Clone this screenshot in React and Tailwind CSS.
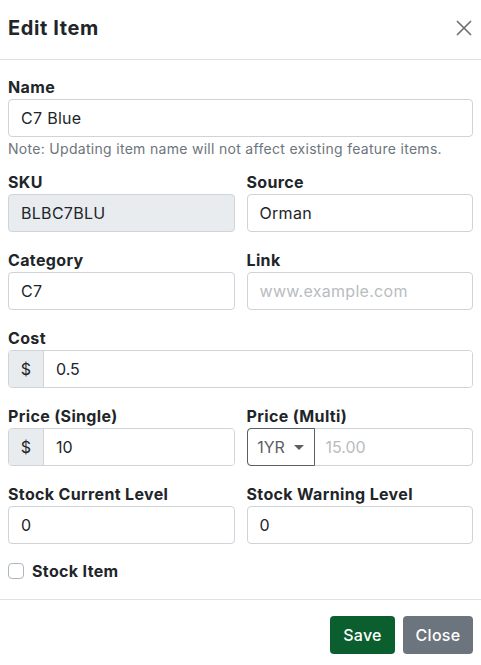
const font = { fontFamily: 'Inter, "Noto Sans", sans-serif' };

function Label({ children }) {
  return <label className="block text-[16px] font-bold text-[#212529] leading-[20px] mb-[2px] tracking-[0.35px]">{children}</label>;
}

function Input({ value, placeholder, disabled, className = '' }) {
  return (
    <div
      className={`h-[38px] border border-[#ced4da] rounded-[4px] px-[12px] flex items-center text-[16px] tracking-[0.3px] ${
        disabled ? 'bg-[#e9ecef]' : 'bg-white'
      } ${value ? 'text-[#212529]' : 'text-[#b8bcc0]'} ${className}`}
    >
      {value || placeholder}
    </div>
  );
}

function Addon({ value }) {
  return (
    <div className="h-[38px] flex border border-[#ced4da] rounded-[4px] overflow-hidden text-[16px] text-[#212529]">
      <div className="w-[35px] bg-[#e9ecef] border-r border-[#ced4da] flex items-center justify-center">$</div>
      <div className="flex-1 px-[12px] flex items-center bg-white">{value}</div>
    </div>
  );
}

function Field({ label, children }) {
  return (
    <div className="flex-1 min-w-0">
      <Label>{label}</Label>
      {children}
    </div>
  );
}

export default function App() {
  return (
    <div className="w-[481px] h-[665px] bg-white" style={font}>
      <div className="h-[60px] flex items-center justify-between px-[8px] pb-[3px] border-b border-[#dee2e6]">
        <h2 className="text-[20px] font-bold text-[#212529] tracking-[0.6px]">Edit Item</h2>
        <svg width="16" height="16" viewBox="0 0 16 16" className="mr-[1px]">
          <path d="M1 1L15 15M15 1L1 15" stroke="#6c6c6c" strokeWidth="1.6" />
        </svg>
      </div>
      <div className="px-[8px] pt-[17px] pb-[16px] flex flex-col">
        <Label>Name</Label>
        <Input value="C7 Blue" />
        <p className="text-[14px] text-[#6c757d] mt-[3px] leading-[18px] tracking-[0.3px]">Note: Updating item name will not affect existing feature items.</p>

        <div className="flex gap-[12px] mt-[14px]">
          <Field label="SKU"><Input value="BLBC7BLU" disabled /></Field>
          <Field label="Source"><Input value="Orman" /></Field>
        </div>
        <div className="flex gap-[12px] mt-[18px]">
          <Field label="Category"><Input value="C7" /></Field>
          <Field label="Link"><Input placeholder="www.example.com" /></Field>
        </div>
        <div className="mt-[18px]">
          <Label>Cost</Label>
          <Addon value="0.5" />
        </div>
        <div className="flex gap-[12px] mt-[18px]">
          <Field label="Price (Single)"><Addon value="10" /></Field>
          <Field label="Price (Multi)">
            <div className="h-[38px] flex border border-[#ced4da] rounded-[4px] text-[16px]">
              <div className="w-[68px] -m-px h-[38px] border border-[#5a5f63] rounded-l-[4px] flex items-center justify-center gap-[9px] text-[#5a5f63]">
                <span>1YR</span>
                <svg width="10" height="5" viewBox="0 0 10 5"><path d="M0 0H10L5 5Z" fill="#5a5f63" /></svg>
              </div>
              <div className="flex-1 px-[12px] flex items-center text-[#b8bcc0]">15.00</div>
            </div>
          </Field>
        </div>
        <div className="flex gap-[12px] mt-[18px]">
          <Field label="Stock Current Level"><Input value="0" /></Field>
          <Field label="Stock Warning Level"><Input value="0" /></Field>
        </div>
        <div className="flex items-center gap-[8px] mt-[15px]">
          <div className="w-[16px] h-[16px] border border-[#adb5bd] rounded-[4px] bg-white" />
          <span className="text-[16px] font-bold text-[#212529] tracking-[0.35px]">Stock Item</span>
        </div>
      </div>
      <div className="border-t border-[#dee2e6] flex justify-end gap-[8px] px-[8px] pt-[16px]">
        <button className="h-[38px] w-[65px] rounded-[4px] bg-[#0b5e2e] text-white text-[16px] font-medium tracking-[0.3px]">Save</button>
        <button className="h-[38px] w-[70px] rounded-[4px] bg-[#6c757d] text-white text-[16px] font-medium tracking-[0.3px]">Close</button>
      </div>
    </div>
  );
}
